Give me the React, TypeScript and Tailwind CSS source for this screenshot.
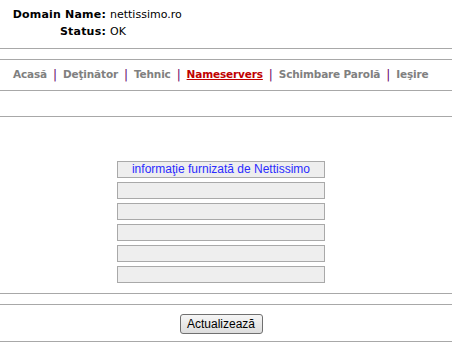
const Rule = () => <div className="h-px bg-[#a8a8a8]" />;

const navItems = [
  { label: "Acasă", active: false },
  { label: "Deţinător", active: false },
  { label: "Tehnic", active: false },
  { label: "Nameservers", active: true },
  { label: "Schimbare Parolă", active: false },
  { label: "Ieşire", active: false },
];

const App = () => {
  const rows = ["informaţie furnizată de Nettissimo", "", "", "", "", ""];

  return (
    <div className="w-[452px] h-[343px] bg-white font-['DejaVu_Sans',Verdana,sans-serif] text-[11px] text-black overflow-hidden">
      <div className="pt-[8px] h-[48px]">
        <div className="grid grid-cols-[106px_1fr] gap-x-[4px] gap-y-[4px] leading-[13px]">
          <span className="font-bold text-right tracking-[0.2px]">Domain Name:</span>
          <span>nettissimo.ro</span>
          <span className="font-bold text-right tracking-[0.2px]">Status:</span>
          <span>OK</span>
        </div>
      </div>
      <Rule />
      <div className="h-[10px]" />
      <Rule />
      <nav className="h-[30px] flex items-center pl-[13px] font-bold text-[10.5px] tracking-[-0.15px] text-[#808080]">
        {navItems.map((item, i) => (
          <span key={item.label} className="flex items-center">
            <a
              href="#"
              className={item.active ? "text-[#c00000] underline" : "text-[#808080]"}
            >
              {item.label}
            </a>
            {i < navItems.length - 1 && (
              <span className="text-[#660066] font-normal text-[12px] px-[6px]">|</span>
            )}
          </span>
        ))}
      </nav>
      <Rule />
      <div className="h-[25px]" />
      <Rule />
      <div className="pt-[44px] h-[176px] flex flex-col items-center">
        <div className="flex flex-col gap-[4px] w-[208px] ml-[-10px]">
          {rows.map((r, i) => (
            <div
              key={i}
              className="h-[17px] border border-[#a9a9a9] bg-[#eeeeee] text-center font-['Liberation_Sans',Arial,sans-serif] text-[12px] leading-[15px] text-[#2b2bff]"
            >
              {r}
            </div>
          ))}
        </div>
      </div>
      <Rule />
      <div className="h-[10px]" />
      <Rule />
      <div className="h-[36px] flex justify-center pt-[9px]">
        <button className="h-[20px] w-[83px] ml-[-10px] rounded-[3px] border border-[#707070] bg-gradient-to-b from-[#f6f6f6] to-[#dddddd] font-['Liberation_Sans',Arial,sans-serif] text-[12px] text-black">
          Actualizează
        </button>
      </div>
      <Rule />
    </div>
  );
};

export default App;
